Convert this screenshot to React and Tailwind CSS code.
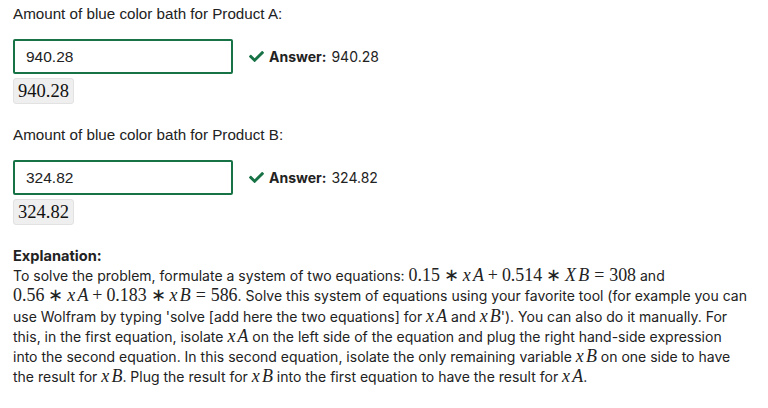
import React from "react";
import { FaCheck } from "react-icons/fa";

// ===== Math helpers (KaTeX-like look) =====
const M = ({ children }) => (
  <span className="whitespace-nowrap font-['Liberation_Serif',serif] text-[1.28em] leading-[0]">{children}</span>
);
// variable like xA: wider italic x as in KaTeX
const V = ({ children }) => (
  <i>
    <span className="mr-[0.12em]">{children[0]}</span>
    {children.slice(1)}
  </i>
);
const Op = ({ children }) => <span className="mx-[0.222em]">{children}</span>;
const Rel = ({ children }) => <span className="mx-[0.278em]">{children}</span>;

// ===== Answer block =====
const AnswerBlock = ({ label, value }) => (
  <div className="mb-[21px]">
    <p className="font-['Liberation_Sans',Arial,sans-serif] text-[15.2px] leading-[20px] text-[#222] mt-[4px]">
      {label}
    </p>
    <div className="flex items-center mt-[15px]">
      <div className="w-[220px] h-[35px] border-2 border-[#177245] rounded-[2px] flex items-center px-[11px] font-['Liberation_Sans',Arial,sans-serif] text-[15.5px] text-[#222]">
        {value}
      </div>
      <div className="ml-[16px] flex items-center gap-[5px] font-['Inter',sans-serif] text-[14px] text-[#222]">
        <FaCheck className="text-[#177245] w-[15px] h-[15px]" />
        <span className="font-bold">Answer:</span>
        <span>{value}</span>
      </div>
    </div>
    <div className="inline-block mt-[4px] px-[4px] h-[26px] leading-[25px] bg-[#efefef] border border-[#e2e2e2] rounded-[3px] font-['Liberation_Serif',serif] text-[18.5px] text-[#111]">
      {value}
    </div>
  </div>
);

// ===== Main Component =====
const App = () => {
  return (
    <div className="bg-white w-[768px] h-[408px] pl-[13px] pr-[20px] overflow-hidden">
      <AnswerBlock label="Amount of blue color bath for Product A:" value="940.28" />
      <AnswerBlock label="Amount of blue color bath for Product B:" value="324.82" />

      <div className="font-['Inter',sans-serif] text-[14px] leading-[20.2px] text-[#222]">
        <p className="font-bold text-[14.6px]">Explanation:</p>
        <p>
          To solve the problem, formulate a system of two equations:{" "}
          <M>0.15<Op>∗</Op><V>xA</V><Op>+</Op>0.514<Op>∗</Op><V>XB</V><Rel>=</Rel>308</M> and{" "}
          <M>0.56<Op>∗</Op><V>xA</V><Op>+</Op>0.183<Op>∗</Op><V>xB</V><Rel>=</Rel>586</M>. Solve this
          system of equations using your favorite tool (for example you can use Wolfram by typing 'solve
          [add here the two equations] for <M><V>xA</V></M> and <M><V>xB</V></M>'). You can also do it
          manually. For this, in the first equation, isolate <M><V>xA</V></M> on the left side of the
          equation and plug the right hand-side expression into the second equation. In this second
          equation, isolate the only remaining variable <M><V>xB</V></M> on one side to have the result
          for <M><V>xB</V></M>. Plug the result for <M><V>xB</V></M> into the first equation to have the
          result for <M><V>xA</V></M>.
        </p>
      </div>
    </div>
  );
};

export default App;
